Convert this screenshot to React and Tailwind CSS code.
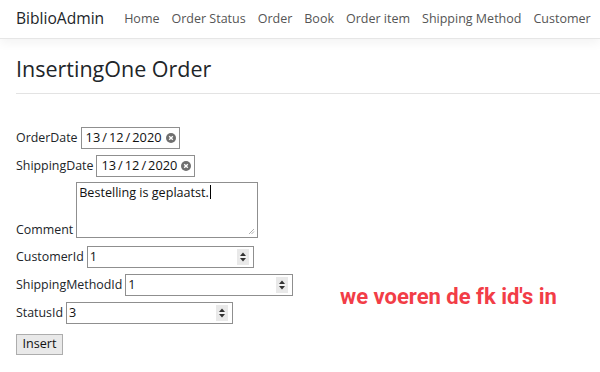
import React from 'react';

const font = { fontFamily: '"Open Sans", "Noto Sans", sans-serif' };

function ClearIcon() {
  return (
    <svg width="10" height="10" viewBox="0 0 10 10" className="shrink-0">
      <circle cx="5" cy="5" r="5" fill="#6f6f6f" />
      <path d="M3.2 3.2 L6.8 6.8 M6.8 3.2 L3.2 6.8" stroke="#fff" strokeWidth="1.4" />
    </svg>
  );
}

function Spinner() {
  return (
    <svg width="12" height="16" viewBox="0 0 12 16" className="shrink-0">
      <rect x="0" y="0" width="12" height="16" fill="#e9e9e9" />
      <path d="M6 3.5 L9 7 L3 7 Z" fill="#333" />
      <path d="M6 12.5 L9 9 L3 9 Z" fill="#333" />
      <line x1="2" y1="8" x2="10" y2="8" stroke="#fff" strokeWidth="0.8" />
    </svg>
  );
}

// date shown the way Chrome lays out the dd / mm / yyyy segments
function DateBox() {
  return (
    <div className="flex h-[22px] w-[99px] items-center justify-between border border-[#8f8f8f] pl-[4px] pr-[3px] text-[12.8px] text-[#111]">
      <span className="flex gap-[2px] whitespace-nowrap">
        <span>13</span>
        <span>/</span>
        <span>12</span>
        <span>/</span>
        <span>2020</span>
      </span>
      <ClearIcon />
    </div>
  );
}

function NumberBox({ value, width }) {
  return (
    <div className={`flex h-[22px] items-center justify-between border border-[#8f8f8f] pl-[2px] pr-[4px] text-[12.6px] text-[#111] ${width}`}>
      <span>{value}</span>
      <Spinner />
    </div>
  );
}

function Row({ label, children, className = '' }) {
  return (
    <div className={`flex items-center gap-[3px] ${className}`}>
      <span className="whitespace-nowrap text-[12.4px] text-[#212529]">{label}</span>
      {children}
    </div>
  );
}

export default function App() {
  const links = ['Home', 'Order Status', 'Order', 'Book', 'Order item', 'Shipping Method', 'Customer'];

  return (
    <div className="relative h-[372px] w-[600px] overflow-hidden bg-white" style={font}>
      <nav className="flex h-[39px] items-center border-b border-[#e6e6e6] pl-4 shadow-[0_4px_10px_rgba(0,0,0,0.05)]">
        <span className="mr-[20px] text-[15.6px] text-[#212529]">BiblioAdmin</span>
        <ul className="flex gap-[12px] text-[12.5px] text-[#555]">
          {links.map((l) => (
            <li key={l} className="whitespace-nowrap">{l}</li>
          ))}
        </ul>
      </nav>

      <main className="pl-4">
        <h3 className="mt-[14px] text-[21.5px] leading-[32px] text-[#212529]">InsertingOne Order</h3>
        <hr className="mt-[8px] border-[#e3e3e3]" />

        <form className="mt-[33px] flex flex-col">
          <Row label="OrderDate">
            <DateBox />
          </Row>
          <Row label="ShippingDate" className="mt-[6px]">
            <DateBox />
          </Row>
          <div className="mt-[5px] flex items-end gap-[3px]">
            <span className="text-[12.4px] leading-[16px] text-[#212529]">Comment</span>
            <div className="relative h-[56px] w-[182px] border border-[#8f8f8f] px-[2px] text-[12.6px] leading-[18px] text-[#111]">
              Bestelling is geplaatst.<span className="ml-[1px] inline-block h-[14px] w-px translate-y-[2px] bg-black" />
              <svg width="6" height="6" viewBox="0 0 6 6" className="absolute bottom-[2px] right-[2px]">
                <path d="M5 0 L0 5 M5 2.5 L2.5 5" stroke="#999" strokeWidth="0.8" />
              </svg>
            </div>
          </div>
          <Row label="CustomerId" className="mt-[8px]">
            <NumberBox value="1" width="w-[167px]" />
          </Row>
          <Row label="ShippingMethodId" className="mt-[6px]">
            <NumberBox value="1" width="w-[168px]" />
          </Row>
          <Row label="StatusId" className="mt-[6px]">
            <NumberBox value="3" width="w-[167px]" />
          </Row>
          <div className="mt-[6px]">
            <button type="button" className="h-[21px] w-[47px] border border-[#adadad] bg-[#e9e9e9] text-[12.6px] leading-[18px] text-[#111]">
              Insert
            </button>
          </div>
        </form>
      </main>

      <div className="absolute left-[340px] top-[280px] text-[22px] font-bold text-[#f23d47]" style={{ fontFamily: 'Roboto, sans-serif' }}>
        we voeren de fk id's in
      </div>
    </div>
  );
}
